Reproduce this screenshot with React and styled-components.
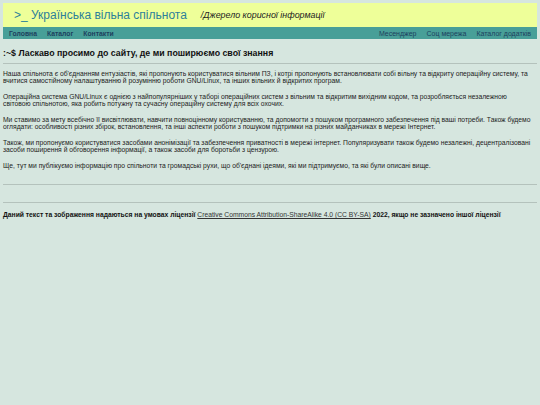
import React from 'react';
import styled, { createGlobalStyle } from 'styled-components';

const Global = createGlobalStyle`
    body {
        margin: 0;
        padding: 3px;
        background: #d6e6df;
        font-family: "Liberation Sans", Arial, sans-serif;
        color: #222;
    }
`

const Header = styled.div`
    background: #eeff99;
    height: 24px;
    display: flex;
    align-items: center;
    padding-left: 11px;
    gap: 14px;
`
const Title = styled.div`
    font-size: 12px;
    color: #2d7f9a;
`
const Tagline = styled.div`
    font-size: 8.9px;
    font-style: italic;
    color: #222;
`
const Nav = styled.div`
    background: #489f98;
    height: 12px;
    display: flex;
    align-items: center;
    justify-content: space-between;
    padding: 0 6px;
`
const NavGroup = styled.div`
    display: flex;
    gap: 10px;
`
const NavLink = styled.a`
    font-size: ${props => props.bold ? '6.8px' : '7px'};
    font-weight: ${props => props.bold ? 'bold' : 'normal'};
    color: #1d3f5e;
    text-decoration: none;
`
const Heading = styled.h2`
    font-size: 8.8px;
    font-weight: bold;
    margin: 0;
    padding: 9px 0 5px;
    color: #111;
`
const Rule = styled.hr`
    border: none;
    border-top: 1px solid #b4c2bc;
    margin: 0;
`
const Content = styled.div`
    padding: 6px 0 6px;
`
const Spacer = styled.div`
    height: 17px;
`
const Para = styled.p`
    font-size: 6.75px;
    line-height: 7px;
    margin: 0 0 9px;
    color: #222;
`
const Footer = styled.div`
    padding-top: 8px;
    font-size: 6.75px;
    font-weight: bold;
    color: #111;
    a {
        font-weight: normal;
        color: #333;
    }
`

export default function App() {
    return (
        <>
            <Global />
            <Header>
                <Title>&gt;_ Українська вільна спільнота</Title>
                <Tagline>/Джерело корисної інформації</Tagline>
            </Header>
            <Nav>
                <NavGroup>
                    <NavLink bold>Головна</NavLink>
                    <NavLink bold>Каталог</NavLink>
                    <NavLink bold>Контакти</NavLink>
                </NavGroup>
                <NavGroup>
                    <NavLink>Месенджер</NavLink>
                    <NavLink>Соц мережа</NavLink>
                    <NavLink>Каталог додатків</NavLink>
                </NavGroup>
            </Nav>
            <Heading>:~$ Ласкаво просимо до сайту, де ми поширюємо свої знання</Heading>
            <Rule />
            <Content>
                <Para>Наша спільнота є об'єднанням ентузіастів, які пропонують користуватися вільним ПЗ, і котрі пропонують встановлювати собі вільну та відкриту операційну систему, та вчитися самостійному налаштуванню й розумінню роботи GNU/Linux, та інших вільних й відкритих програм.</Para>
                <Para>Операційна система GNU/Linux є однією з найпопулярніших у таборі операційних систем з вільним та відкритим вихідним кодом, та розробляється незалежною<br />світовою спільнотою, яка робить потужну та сучасну операційну систему для всіх охочих.</Para>
                <Para>Ми ставимо за мету всебічно її висвітлювати, навчити повноцінному користуванню, та допомогти з пошуком програмного забезпечення під ваші потреби. Також будемо оглядати: особливості різних збірок, встановлення, та інші аспекти роботи з пошуком підтримки на різних майданчиках в мережі Інтернет.</Para>
                <Para>Також, ми пропонуємо користуватися засобами анонімізації та забезпечення приватності в мережі інтернет. Популяризувати також будемо незалежні, децентралізовані засоби поширення й обговорення інформації, а також засоби для боротьби з цензурою.</Para>
                <Para>Ще, тут ми публікуємо інформацію про спільноти та громадські рухи, що об'єднані ідеями, які ми підтримуємо, та які були описані вище.</Para>
            </Content>
            <Rule />
            <Spacer />
            <Rule />
            <Footer>
                Даний текст та зображення надаються на умовах ліцензії <a href="#">Creative Commons Attribution-ShareAlike 4.0 (CC BY-SA)</a> 2022, якщо не зазначено іншої ліцензії
            </Footer>
        </>
    )
}
